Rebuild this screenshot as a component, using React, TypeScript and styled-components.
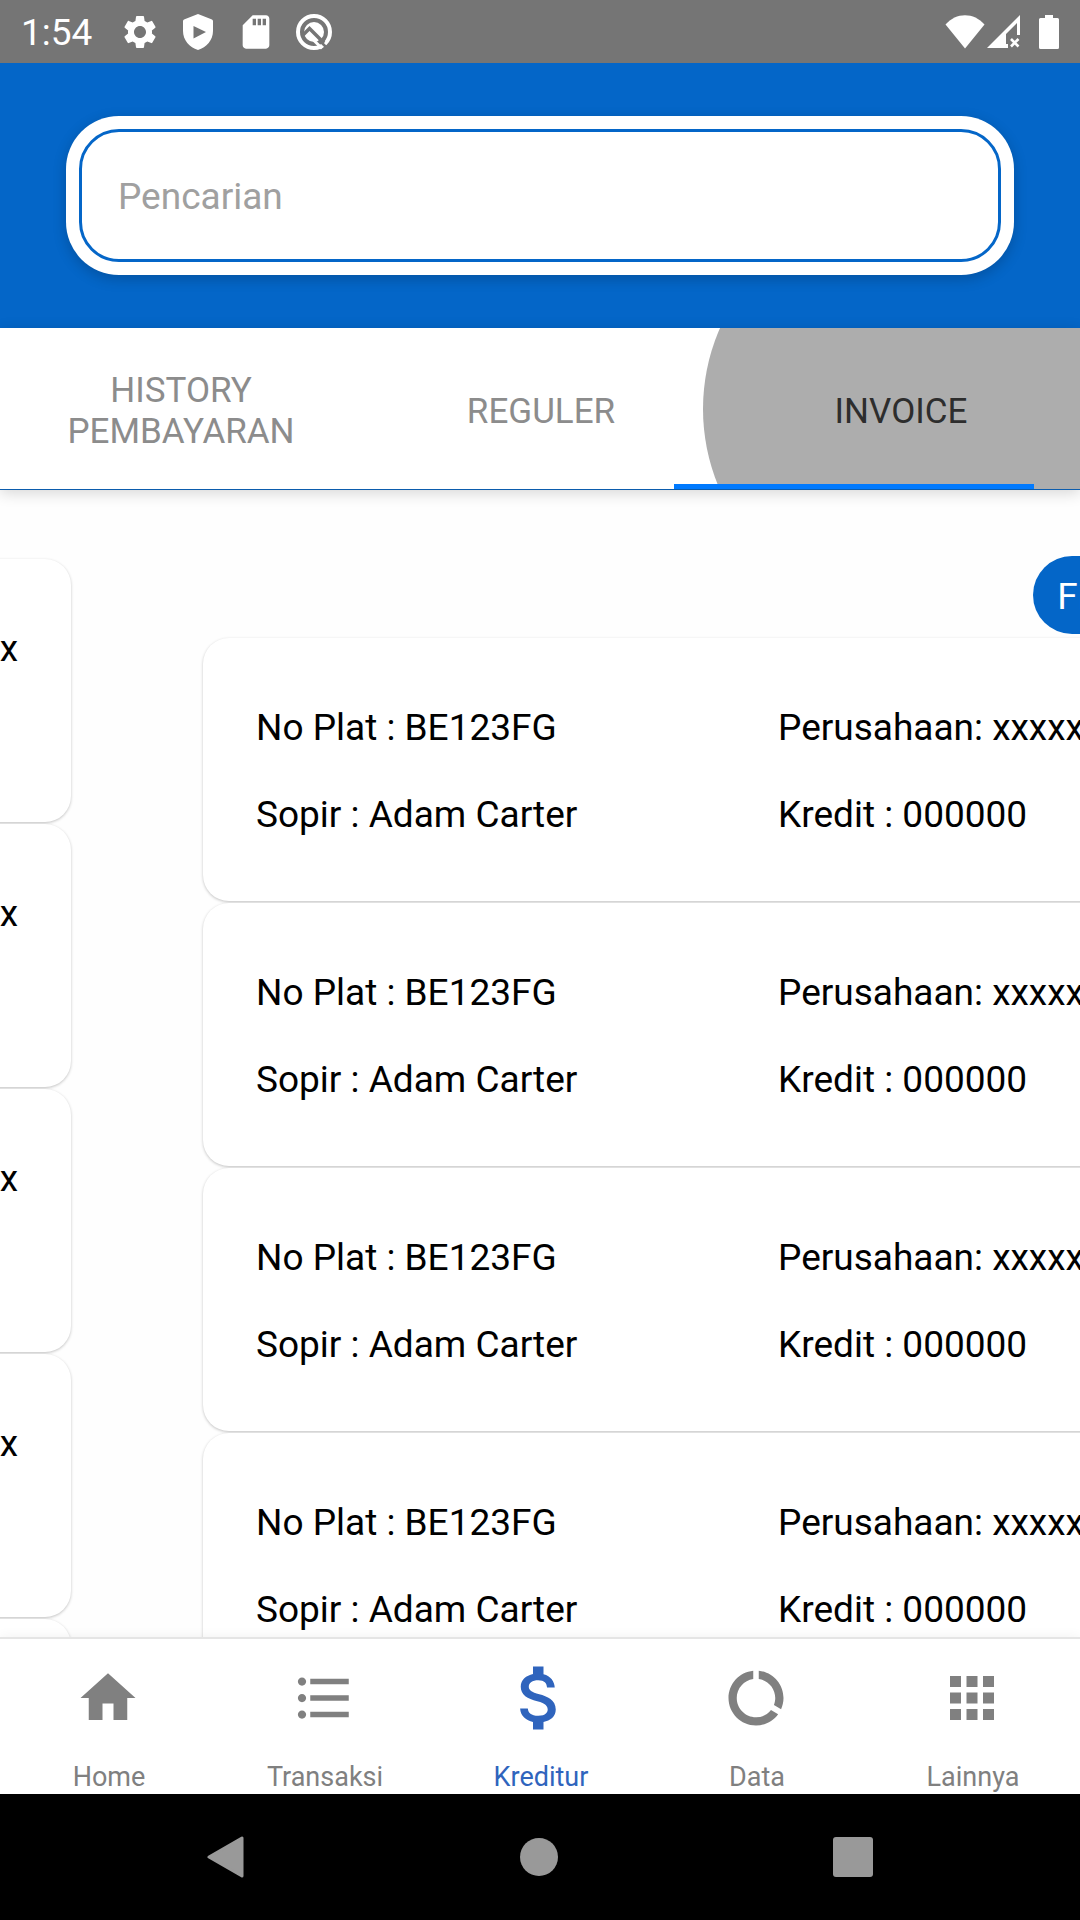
import React, { useState } from 'react';
import styled, { createGlobalStyle } from 'styled-components';
import {
  MdApps,
  MdAttachMoney,
  MdDataUsage,
  MdFormatListBulleted,
  MdHome,
  MdSdStorage,
  MdSettings,
} from 'react-icons/md';

const BLUE = '#0466c8';
/* distance the incoming page still has to travel */
const DRAG = 137;

const GlobalStyle = createGlobalStyle`
  *, *::before, *::after { box-sizing: border-box; }
  body {
    margin: 0;
    background: #fefefe;
    font-family: Roboto, "Noto Sans", sans-serif;
  }
  button, input { font-family: inherit; }
`;

const Screen = styled.div`
  display: flex;
  flex-direction: column;
  height: 100vh;
  overflow: hidden;
`;

const StatusBar = styled.div`
  display: flex;
  flex: none;
  align-items: center;
  justify-content: space-between;
  height: 63px;
  padding: 0 21px;
  background: #757575;
  color: #fff;
`;

const Clock = styled.span`
  padding-top: 3px;
  font-size: 37px;
  line-height: 44px;
`;

const StatusGroup = styled.div<{ $gap: number }>`
  display: flex;
  align-items: center;
  gap: ${(p) => p.$gap}px;
`;

const Header = styled.header`
  flex: none;
  padding: 53px 66px;
  background: ${BLUE};
`;

const SearchBox = styled.label`
  display: block;
  padding: 13px;
  border-radius: 53px;
  background: #fff;
  box-shadow: 0 4px 14px rgba(0, 0, 0, 0.2);
`;

const SearchInput = styled.input`
  display: block;
  width: 100%;
  height: 133px;
  padding: 2px 36px 0;
  border: 3px solid ${BLUE};
  border-radius: 40px;
  outline: none;
  background: #fff;
  color: #000;
  font-size: 37px;
  &::placeholder {
    color: #a0a0a0;
    opacity: 1;
  }
`;

const Tabs = styled.div`
  position: relative;
  z-index: 1;
  display: flex;
  flex: none;
  height: 162px;
  border-bottom: 1px solid #0b5cad;
  background: #fff;
  box-shadow: 0 3px 14px rgba(0, 0, 0, 0.16);
`;

const TabStrip = styled.div`
  position: relative;
  display: flex;
  flex: 1;
  overflow: hidden;
`;

const Tab = styled.button<{ $active: boolean }>`
  position: relative;
  display: flex;
  flex: 1;
  align-items: center;
  justify-content: center;
  padding: 0 28px 0 30px;
  border: 0;
  background: transparent;
  color: ${(p) => (p.$active ? '#2d2d2d' : '#8c8c8c')};
  font-size: 35px;
  line-height: 41px;
  text-transform: uppercase;
`;

const TabLabel = styled.span`
  position: relative;
  padding-top: 5px;
`;

const Ripple = styled.span`
  position: absolute;
  top: 50%;
  left: 50%;
  width: 402px;
  height: 402px;
  margin: -201px -197px;
  border-radius: 50%;
  background: #adadad;
`;

const Indicator = styled.span`
  position: absolute;
  bottom: 0;
  width: calc(100% / 3);
  height: 5px;
  background: #007aff;
`;

const Pager = styled.main`
  flex: 1;
  min-height: 0;
  overflow: hidden;
  background: #fefefe;
`;

const Track = styled.div`
  display: flex;
  width: 100%;
  margin-left: calc(${DRAG}px - 100%);
`;

const Page = styled.section<{ $top: number }>`
  display: flex;
  flex: 0 0 100%;
  flex-direction: column;
  padding: ${(p) => p.$top}px 66px 0;
`;

const FilterButton = styled.button`
  align-self: flex-end;
  height: 78px;
  margin: 0 -13px 4px 0;
  padding: 4px 24px 0;
  border: 0;
  border-radius: 39px;
  background: ${BLUE};
  color: #fff;
  font-size: 37px;
  line-height: 44px;
`;

const CardList = styled.ul`
  display: flex;
  flex-direction: column;
  gap: 2px;
  margin: 0;
  padding: 0;
  list-style: none;
`;

const Card = styled.li<{ $columns: string }>`
  display: grid;
  grid-template-columns: ${(p) => p.$columns};
  row-gap: 43px;
  padding: 68px 53px 64px;
  border-radius: 26px;
  background: #fff;
  box-shadow: 0 1px 3px rgba(0, 0, 0, 0.24);
  color: #000;
  font-size: 37px;
  line-height: 44px;
  white-space: nowrap;
`;

const BottomNav = styled.nav`
  position: relative;
  display: flex;
  flex: none;
  height: 157px;
  border-top: 2px solid #e5e5e5;
  background: #fff;
  box-shadow: 0 0 12px rgba(0, 0, 0, 0.06);
`;

const NavItem = styled.a<{ $active: boolean }>`
  display: flex;
  flex: 1;
  flex-direction: column;
  align-items: center;
  justify-content: space-between;
  padding-top: 17px;
  color: ${(p) => (p.$active ? '#2f64bd' : '#808080')};
  font-size: 27px;
  line-height: 34px;
  text-decoration: none;
`;

const NavIcon = styled.span`
  display: flex;
  align-items: center;
  justify-content: center;
  height: 84px;
`;

const NavLabel = styled.span`
  padding-left: 2px;
`;

const SystemBar = styled.div`
  display: flex;
  flex: none;
  align-items: center;
  justify-content: space-around;
  height: 126px;
  padding: 0 70px;
  background: #000;
`;

const SystemButton = styled.button`
  display: flex;
  padding: 0;
  border: 0;
  background: transparent;
  color: #999;
`;

function ShieldIcon() {
  return (
    <svg width="40" height="40" viewBox="-5 -2 40 40" aria-hidden="true">
      <path
        fill="#fff"
        fillRule="evenodd"
        d="M15 0 29 5.500Q30 6 30 7V17C30 26 23.500 33.500 15 36 6.500 33.500 0 26 0 17V7Q0 6 1 5.500ZM10.500 12V24.500L23 18Z"
      />
    </svg>
  );
}

function QIcon() {
  return (
    <svg width="40" height="40" viewBox="-1 -1 40 40" aria-hidden="true">
      <circle cx="19" cy="19" r="16" fill="none" stroke="#fff" strokeWidth="4" />
      <circle cx="19" cy="19" r="10" fill="#fff" />
      <path d="M7 23 14.500 15.500 29 30" fill="none" stroke="#757575" strokeWidth="3.500" />
      <path d="M19 27.500 27 35.500" fill="none" stroke="#fff" strokeWidth="3" />
      <path d="M24 27 32 35" fill="none" stroke="#757575" strokeWidth="2.500" />
    </svg>
  );
}

function WifiIcon() {
  return (
    <svg width="40" height="34" viewBox="0 0 40 34" aria-hidden="true">
      <path fill="#fff" d="M.5 9.500C11-3 29-3 39.500 9.500L20 33.500Z" />
    </svg>
  );
}

function SignalIcon() {
  return (
    <svg width="34" height="34" viewBox="0 0 34 34" aria-hidden="true">
      <path fill="#fff" d="M33 0V20H30V8L19 19V29H21V33H0Z" />
      <path d="M24 24 31.500 31.500M31.500 24 24 31.500" stroke="#fff" strokeWidth="2.600" />
    </svg>
  );
}

function BatteryIcon() {
  return (
    <svg width="20" height="34" viewBox="0 0 20 34" aria-hidden="true">
      <path
        fill="#fff"
        d="M6 0H14V3H18.500Q20 3 20 4.500V32.500Q20 34 18.500 34H1.500Q0 34 0 32.500V4.500Q0 3 1.500 3H6Z"
      />
    </svg>
  );
}

const TABS = ['History Pembayaran', 'Reguler', 'Invoice'];

const NAV = [
  { label: 'Home', Icon: MdHome, size: 66 },
  { label: 'Transaksi', Icon: MdFormatListBulleted, size: 66 },
  { label: 'Kreditur', Icon: MdAttachMoney, size: 84 },
  { label: 'Data', Icon: MdDataUsage, size: 66 },
  { label: 'Lainnya', Icon: MdApps, size: 66 },
];

const CREDITS = Array.from({ length: 5 }, (_, id) => ({
  id,
  plate: 'BE123FG',
  company: 'xxxxxx',
  driver: 'Adam Carter',
  credit: '000000',
}));

function Credits({ count, columns }: { count: number; columns: string }) {
  return (
    <CardList>
      {CREDITS.slice(0, count).map((c) => (
        <Card key={c.id} $columns={columns}>
          <span>No Plat : {c.plate}</span>
          <span>Perusahaan: {c.company}</span>
          <span>Sopir : {c.driver}</span>
          <span>Kredit : {c.credit}</span>
        </Card>
      ))}
    </CardList>
  );
}

export default function App() {
  const [query, setQuery] = useState('');
  const [active, setActive] = useState(2);

  return (
    <Screen>
      <GlobalStyle />
      <StatusBar>
        <StatusGroup $gap={28}>
          <Clock>1:54</Clock>
          <StatusGroup $gap={18}>
            <MdSettings size={40} />
            <ShieldIcon />
            <MdSdStorage size={40} />
            <QIcon />
          </StatusGroup>
        </StatusGroup>
        <StatusGroup $gap={18}>
          <StatusGroup $gap={2}>
            <WifiIcon />
            <SignalIcon />
          </StatusGroup>
          <BatteryIcon />
        </StatusGroup>
      </StatusBar>

      <Header>
        <SearchBox>
          <SearchInput
            type="text"
            aria-label="Pencarian"
            placeholder="Pencarian"
            value={query}
            onChange={(e) => setQuery(e.target.value)}
          />
        </SearchBox>
      </Header>

      <Tabs>
        <TabStrip role="tablist">
          {TABS.map((label, i) => (
            <Tab
              key={label}
              type="button"
              role="tab"
              aria-selected={i === active}
              $active={i === active}
              onClick={() => setActive(i)}
            >
              {i === active && <Ripple />}
              <TabLabel>{label}</TabLabel>
            </Tab>
          ))}
          <Indicator style={{ left: `calc(${active} * 100% / 3 - ${Math.round(DRAG / 3)}px)` }} />
        </TabStrip>
      </Tabs>

      <Pager>
        <Track>
          <Page $top={69}>
            <Credits count={5} columns="1fr auto" />
          </Page>
          <Page $top={66}>
            <FilterButton type="button">Filter</FilterButton>
            <Credits count={4} columns="62% 38%" />
          </Page>
        </Track>
      </Pager>

      <BottomNav>
        {NAV.map(({ label, Icon, size }) => (
          <NavItem key={label} href="#" $active={label === 'Kreditur'}>
            <NavIcon>
              <Icon size={size} />
            </NavIcon>
            <NavLabel>{label}</NavLabel>
          </NavItem>
        ))}
      </BottomNav>

      <SystemBar>
        <SystemButton type="button" aria-label="Back">
          <svg width="38" height="42" viewBox="0 0 38 42" aria-hidden="true">
            <path
              d="M35 2V40L2 21Z"
              fill="currentColor"
              stroke="currentColor"
              strokeWidth="3"
              strokeLinejoin="round"
            />
          </svg>
        </SystemButton>
        <SystemButton type="button" aria-label="Home screen">
          <svg width="38" height="38" viewBox="0 0 38 38" aria-hidden="true">
            <circle cx="19" cy="19" r="19" fill="currentColor" />
          </svg>
        </SystemButton>
        <SystemButton type="button" aria-label="Recent apps">
          <svg width="40" height="40" viewBox="0 0 40 40" aria-hidden="true">
            <rect width="40" height="40" rx="3" fill="currentColor" />
          </svg>
        </SystemButton>
      </SystemBar>
    </Screen>
  );
}
